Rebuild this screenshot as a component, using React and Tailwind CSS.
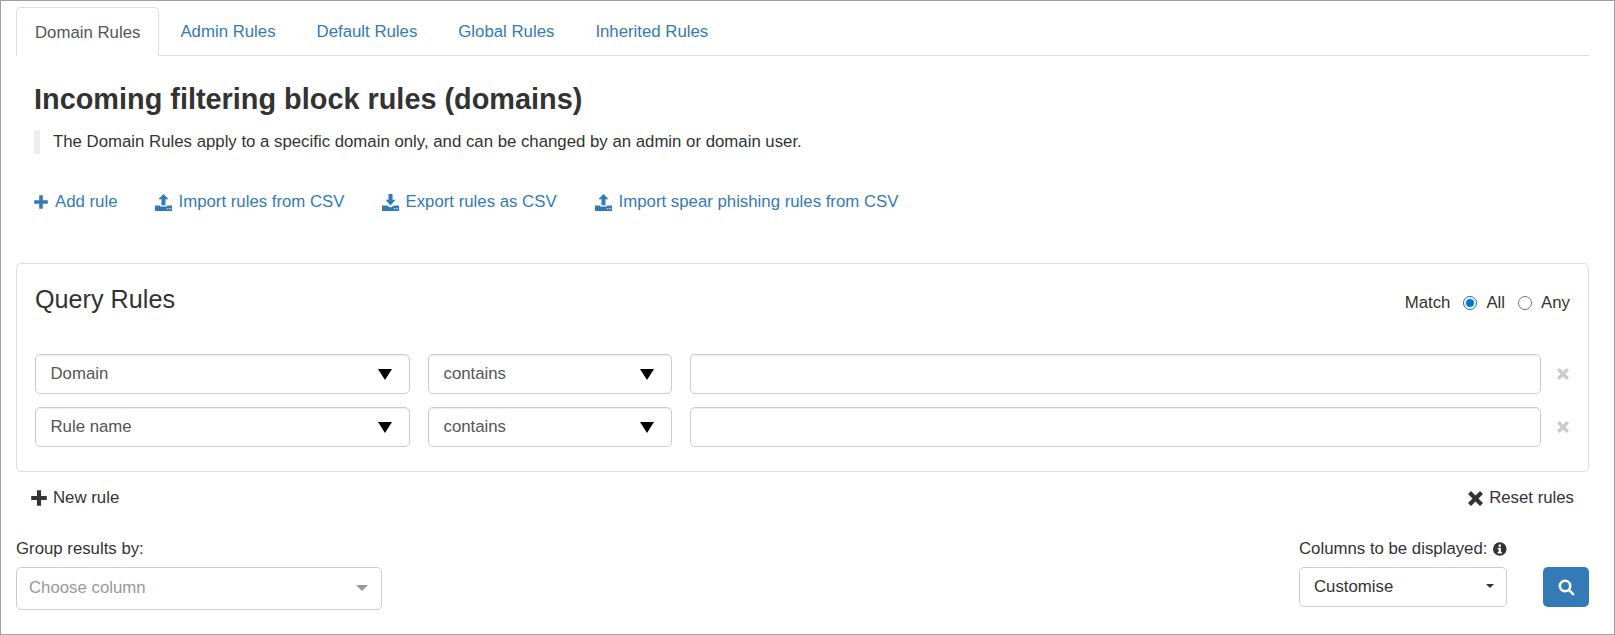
import React from 'react';

const Plus = ({ className }) => (
  <svg viewBox="0 0 14 14" className={className} fill="currentColor"><path d="M5.2 0.2h3.6v5h5v3.6h-5v5H5.2v-5h-5V5.2h5z" /></svg>
);

const Cross = ({ className }) => (
  <svg viewBox="0 0 14 14" className={className} fill="currentColor"><path d="M2.8 0 7 4.2 11.2 0 14 2.8 9.8 7 14 11.2 11.2 14 7 9.8 2.8 14 0 11.2 4.2 7 0 2.8z" /></svg>
);

const ImportIcon = ({ className }) => (
  <svg viewBox="0 0 16 16" className={className} fill="currentColor">
    <path fillRule="evenodd" d="M8 0 12.8 5H9.9V10.6H6.1V5H3.2zM0 10.8H4.8V11.8H11.2V10.8H16V16H0zM11.4 13.4v1h1.2v-1zM13.6 13.4v1h1.2v-1z" />
  </svg>
);

const ExportIcon = ({ className }) => (
  <svg viewBox="0 0 16 16" className={className} fill="currentColor">
    <path fillRule="evenodd" d="M6.1 0H9.9V5.4H12.8L8 10.8 3.2 5.4H6.1zM0 10.8H4.6L8 12.6 11.4 10.8H16V16H0zM11.4 13.4v1h1.2v-1zM13.6 13.4v1h1.2v-1z" />
  </svg>
);

const SelectBox = ({ label, className }) => (
  <div className={`flex h-10 items-center justify-between rounded-[5px] border border-[#ccc] bg-white pl-[14.5px] pr-[17px] text-[#555] shadow-[inset_0_1px_1px_rgba(0,0,0,0.075)] ${className}`}>
    <span>{label}</span>
    <span className="h-0 w-0 border-x-[7px] border-t-[11px] border-x-transparent border-t-black" />
  </div>
);

const RuleRow = ({ field }) => (
  <div className="flex items-center">
    <SelectBox label={field} className="w-[375px]" />
    <SelectBox label="contains" className="ml-[18px] w-[244px]" />
    <div className="ml-[18px] h-10 w-[851px] rounded-[5px] border border-[#ccc] bg-white shadow-[inset_0_1px_1px_rgba(0,0,0,0.075)]" />
    <Cross className="ml-[16px] h-[12px] w-[12px] text-[#ccc]" />
  </div>
);

const ActionLink = ({ icon, children, className }) => (
  <a className={`flex items-center text-[#337ab7] ${className}`}>
    {icon}
    {children}
  </a>
);

export default function App() {
  const tabs = ['Admin Rules', 'Default Rules', 'Global Rules', 'Inherited Rules'];

  return (
    <div className="h-[635px] w-[1615px] overflow-hidden border border-[#a0a0a0] bg-white pl-[15px] pr-[25px] pt-[6px] font-['Liberation_Sans',Arial,sans-serif] text-[16.8px] leading-[24px] text-[#333]">
      <div className="flex h-[49px] border-b border-[#ddd]">
        <div className="h-[49px] rounded-t-[5px] border border-b-0 border-[#ddd] bg-white px-[18px] pt-[13px] text-[#555]">Domain Rules</div>
        <div className="ml-[3px] flex">
          {tabs.map((tab) => (
            <a key={tab} className="mr-[5px] px-[18px] pt-[13px] text-[#337ab7]">{tab}</a>
          ))}
        </div>
      </div>

      <div className="pl-[18px]">
        <h1 className="mt-[25px] text-[28.86px] font-bold leading-[36px] text-[#333]">Incoming filtering block rules (domains)</h1>
        <p className="mt-[13px] h-[24px] border-l-[6px] border-[#eee] pl-[13px] text-[#333]">
          The Domain Rules apply to a specific domain only, and can be changed by an admin or domain user.
        </p>
        <div className="mt-[36px] flex h-[24px]">
          <ActionLink icon={<Plus className="mr-[7px] h-[14px] w-[14px]" />}>Add rule</ActionLink>
          <ActionLink className="ml-[37px]" icon={<ImportIcon className="mr-[7px] h-[17px] w-[17px]" />}>Import rules from CSV</ActionLink>
          <ActionLink className="ml-[37px]" icon={<ExportIcon className="mr-[7px] h-[17px] w-[17px]" />}>Export rules as CSV</ActionLink>
          <ActionLink className="ml-[38px]" icon={<ImportIcon className="mr-[7px] h-[17px] w-[17px]" />}>Import spear phishing rules from CSV</ActionLink>
        </div>
      </div>

      <div className="mt-[49px] h-[209px] rounded-[5px] border border-[#ddd] px-[18px] pt-[19px]">
        <div className="flex h-[36px] items-center justify-between">
          <h2 className="pb-[4px] text-[25.2px] leading-[30px]">Query Rules</h2>
          <div className="flex items-center pt-[4px]">
            <span>Match</span>
            <span className="ml-[13px] flex h-[14px] w-[14px] items-center justify-center rounded-full border border-[#0075db]">
              <span className="h-[8px] w-[8px] rounded-full bg-[#0075db]" />
            </span>
            <span className="ml-[9px]">All</span>
            <span className="ml-[13px] h-[14px] w-[14px] rounded-full border border-[#767676]" />
            <span className="ml-[9px]">Any</span>
          </div>
        </div>
        <div className="mt-[35px] flex flex-col gap-[13px]">
          <RuleRow field="Domain" />
          <RuleRow field="Rule name" />
        </div>
      </div>

      <div className="mt-[14px] flex h-[24px] justify-between px-[15px]">
        <span className="flex items-center"><Plus className="mr-[6px] h-[16px] w-[16px]" />New rule</span>
        <span className="flex items-center"><Cross className="mr-[6px] h-[15px] w-[15px]" />Reset rules</span>
      </div>

      <div className="mt-[27px] flex items-start">
        <div>
          <div className="h-[24px]">Group results by:</div>
          <div className="mt-[6px] flex h-[43px] w-[366px] items-center justify-between rounded-[5px] border border-[#ccc] px-[12px] pb-[2px] text-[#999]">
            <span>Choose column</span>
            <span className="mr-[1px] h-0 w-0 border-x-[6px] border-t-[6px] border-x-transparent border-t-[#999]" />
          </div>
        </div>
        <div className="ml-auto w-[208px]">
          <div className="flex h-[24px] items-center whitespace-nowrap">
            Columns to be displayed:
            <svg viewBox="0 0 14 14" className="ml-[6px] h-[14px] w-[14px]" fill="currentColor">
              <path fillRule="evenodd" d="M7 0a7 7 0 1 1 0 14A7 7 0 0 1 7 0zM5.8 2.4v2.2h2.4V2.4zM4.8 5.8v1.4h1v3H4.8v1.4h4.4v-1.4h-1V5.8z" />
            </svg>
          </div>
          <div className="mt-[6px] flex h-[40px] items-center justify-between rounded-[5px] border border-[#ccc] pl-[14px] pr-[12px]">
            <span>Customise</span>
            <span className="mb-[2px] h-0 w-0 border-x-[4px] border-t-[4px] border-x-transparent border-t-[#333]" />
          </div>
        </div>
        <button className="ml-[36px] mt-[30px] flex h-[40px] w-[46px] items-center justify-center rounded-[5px] bg-[#337ab7] text-white">
          <svg viewBox="0 0 16 16" className="h-[17px] w-[17px]" fill="none" stroke="currentColor">
            <circle cx="6.6" cy="6.6" r="4.9" strokeWidth="2.4" />
            <path d="M10.4 10.4 15 15" strokeWidth="2.4" />
          </svg>
        </button>
      </div>
    </div>
  );
}
